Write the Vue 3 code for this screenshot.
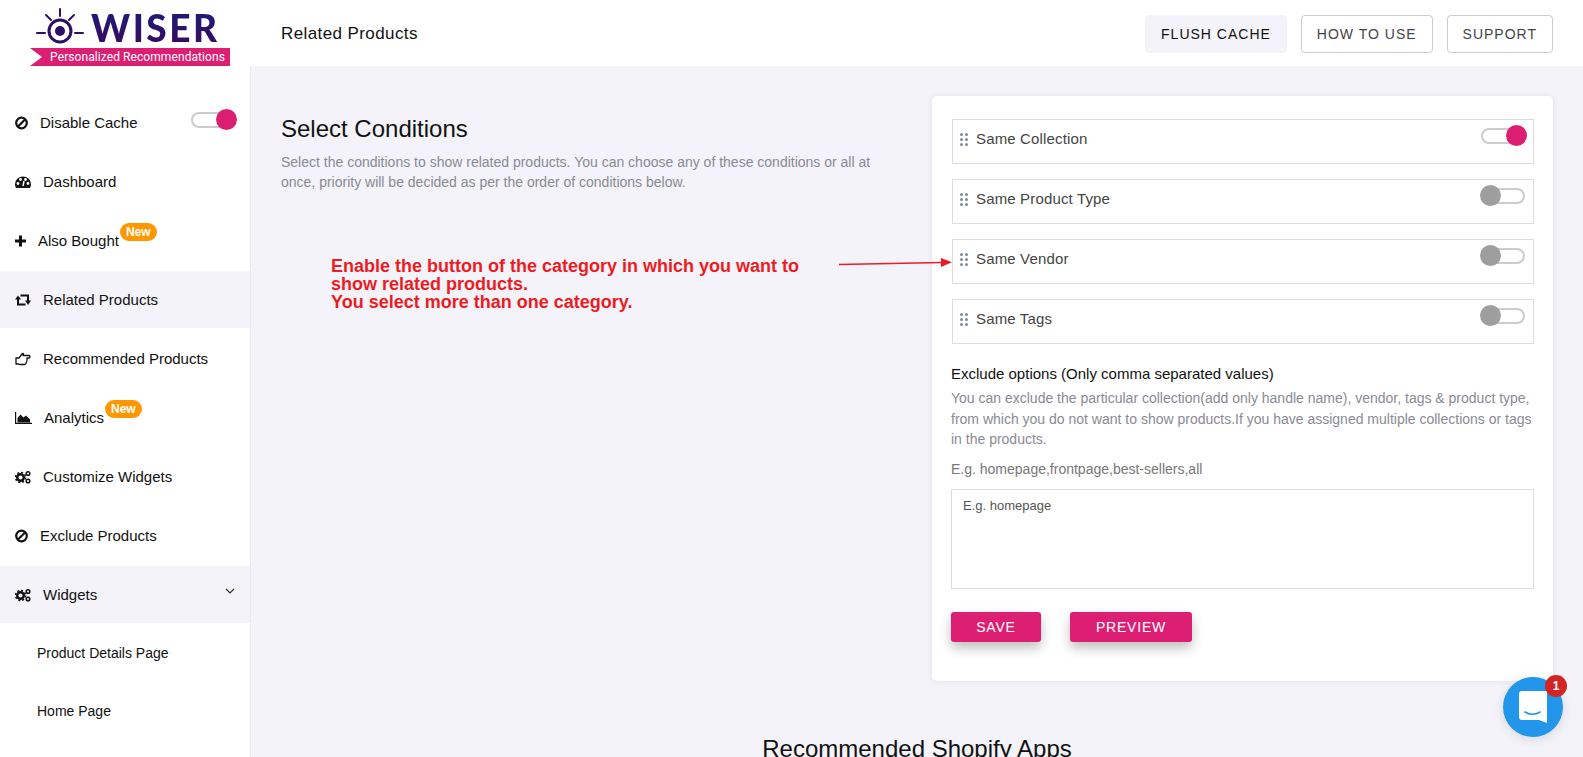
<script setup>
const navItems = [
  { label: "Dashboard", icon: "gauge", w: 16 },
  { label: "Also Bought", icon: "plus", w: 11, badge: true },
  { label: "Related Products", icon: "retweet", w: 16, active: true },
  { label: "Recommended Products", icon: "hand", w: 16 },
  { label: "Analytics", icon: "chart", w: 17, badge: true },
  { label: "Customize Widgets", icon: "cogs", w: 16 },
  { label: "Exclude Products", icon: "ban", w: 13 },
];

const conditions = [
  { label: "Same Collection", on: true },
  { label: "Same Product Type", on: false },
  { label: "Same Vendor", on: false },
  { label: "Same Tags", on: false },
];
</script>

<template>
  <div class="page">
    <header class="topbar">
      <div class="logo">
        <div class="logo-top">
          <svg class="eye" width="50" height="36" viewBox="0 0 50 36">
            <g fill="none" stroke="#2f0f63" stroke-width="2" stroke-linecap="round">
              <circle cx="25" cy="23" r="11" stroke-width="3" />
              <path d="M25 1v7M11 7l5 5M39 7l-5 5M2 25h8M40 25h8" />
            </g>
            <circle cx="25" cy="23" r="5" fill="#2f0f63" />
          </svg>
          <span class="wordmark">WISER</span>
        </div>
        <div class="logo-band">Personalized Recommendations</div>
      </div>
      <div class="page-title">Related Products</div>
      <div class="top-actions">
        <button class="btn-top flush">FLUSH CACHE</button>
        <button class="btn-top">HOW TO USE</button>
        <button class="btn-top">SUPPORT</button>
      </div>
    </header>

    <div class="layout">
      <aside class="sidebar">
        <div class="nav-item">
          <svg class="nav-icon" width="13" height="14" viewBox="0 0 13 14">
            <circle cx="6.5" cy="7" r="5.3" fill="none" stroke="#111" stroke-width="2.2" />
            <path d="M3 10.5l7-7" stroke="#111" stroke-width="2.2" />
          </svg>
          <span>Disable Cache</span>
          <span class="toggle side-toggle on"><i class="track"></i><i class="knob"></i></span>
        </div>

        <div v-for="item in navItems" :key="item.label" class="nav-item" :class="{ active: item.active }">
          <svg class="nav-icon" :width="item.w" height="14" :viewBox="`0 0 ${item.w} 14`">
            <template v-if="item.icon === 'gauge'">
              <path d="M0 9a8 7.500 0 0 1 16 0c0 1.600-.5 3-1.200 4H1.200C.5 12 0 10.600 0 9z" fill="#111" />
              <circle cx="3" cy="8.500" r="1.400" fill="#fff" />
              <circle cx="5.500" cy="4.500" r="1.400" fill="#fff" />
              <circle cx="13" cy="8.500" r="1.400" fill="#fff" />
              <circle cx="10.500" cy="4.500" r="1.400" fill="#fff" />
              <path d="M8 11l1-5" stroke="#fff" stroke-width="1.500" />
            </template>
            <path v-else-if="item.icon === 'plus'" d="M5.500 1.500v11M0 7h11" stroke="#111" stroke-width="3" />
            <template v-else-if="item.icon === 'retweet'">
              <path d="M3 5v6.500h7.500M13 9V2.500H5.500" fill="none" stroke="#111" stroke-width="2" />
              <path d="M0 6.500l3-4 3 4zM10 7.500l3 4.500 3-4.500z" fill="#111" />
            </template>
            <path v-else-if="item.icon === 'hand'" d="M1 6h3l3-4c.3-.6 1-.7 1.500-.5L8 3.500h6c1.300 0 1.300 2.500 0 2.500h-2c.3 1.500.1 3-.6 4-.2 1.500-.8 2.500-2 2.500H4.500L3.500 12H1z" fill="none" stroke="#111" stroke-width="1.300" stroke-linejoin="round" />
            <template v-else-if="item.icon === 'chart'">
              <path d="M.6 1v11.400H17" fill="none" stroke="#111" stroke-width="1.200" />
              <path d="M2.500 11.500V7l3-3.500 3 3 2.500-2 4 4v3z" fill="#111" />
            </template>
            <template v-else-if="item.icon === 'cogs'">
              <circle cx="5.500" cy="7.500" r="3.300" fill="none" stroke="#111" stroke-width="2.400" />
              <circle cx="5.500" cy="7.500" r="5" fill="none" stroke="#111" stroke-width="1.600" stroke-dasharray="2 1.930" />
              <circle cx="13" cy="3.500" r="1.800" fill="none" stroke="#111" stroke-width="1.500" />
              <circle cx="13" cy="11" r="1.800" fill="none" stroke="#111" stroke-width="1.500" />
            </template>
            <template v-else>
              <circle cx="6.500" cy="7" r="5.300" fill="none" stroke="#111" stroke-width="2.200" />
              <path d="M3 10.500l7-7" stroke="#111" stroke-width="2.200" />
            </template>
          </svg>
          <span>{{ item.label }}</span>
          <span v-if="item.badge" class="badge-new">New</span>
        </div>

        <div class="nav-item active">
          <svg class="nav-icon" width="16" height="14" viewBox="0 0 16 14">
            <circle cx="5.500" cy="7.500" r="3.300" fill="none" stroke="#111" stroke-width="2.400" />
            <circle cx="5.500" cy="7.500" r="5" fill="none" stroke="#111" stroke-width="1.600" stroke-dasharray="2 1.930" />
            <circle cx="13" cy="3.500" r="1.800" fill="none" stroke="#111" stroke-width="1.500" />
            <circle cx="13" cy="11" r="1.800" fill="none" stroke="#111" stroke-width="1.500" />
          </svg>
          <span>Widgets</span>
          <svg class="chevron" width="10" height="6" viewBox="0 0 10 6">
            <path d="M1 1l4 4 4-4" fill="none" stroke="#333" stroke-width="1.200" />
          </svg>
        </div>

        <div class="sub-item">Product Details Page</div>
        <div class="sub-item">Home Page</div>
      </aside>

      <main class="content">
        <div class="columns">
          <section class="intro">
            <h2 class="intro-title">Select Conditions</h2>
            <p class="intro-text">
              Select the conditions to show related products. You can choose any of these conditions or all at once, priority will be decided as per the order of conditions below.
            </p>
            <p class="note">
              Enable the button of the category in which you want to show related products.<br />
              You select more than one category.
            </p>
          </section>

          <section class="card">
            <div v-for="c in conditions" :key="c.label" class="cond-row">
              <span class="grip"><i v-for="n in 6" :key="n"></i></span>
              <span class="cond-label">{{ c.label }}</span>
              <span class="toggle" :class="{ on: c.on }"><i class="track"></i><i class="knob"></i></span>
            </div>

            <div class="exclude">
              <h4 class="exclude-title">Exclude options (Only comma separated values)</h4>
              <p class="exclude-text">
                You can exclude the particular collection(add only handle name), vendor, tags &amp; product type, from which you do not want to show products.If you have assigned multiple collections or tags in the products.
              </p>
              <p class="example">E.g. homepage,frontpage,best-sellers,all</p>
              <textarea class="exclude-input" placeholder="E.g. homepage"></textarea>

              <div class="card-actions">
                <button class="btn-pink save">SAVE</button>
                <button class="btn-pink preview">PREVIEW</button>
              </div>
            </div>
          </section>
        </div>

        <h2 class="apps-title">Recommended Shopify Apps</h2>

        <svg class="note-arrow" width="114" height="12" viewBox="0 0 114 12">
          <path d="M0 7.500L103 5.500" stroke="#ed1c24" stroke-width="1.500" />
          <path d="M102 1l11 4.300-11 4.700z" fill="#ed1c24" />
        </svg>
      </main>
    </div>

    <div class="chat">
      <svg width="30" height="34" viewBox="0 0 30 34">
        <path d="M4 1h25v32l-8-3H4a3 3 0 0 1-3-3V4a3 3 0 0 1 3-3z" fill="#fff" />
        <path d="M7 22c4 3 11 3 15 0" fill="none" stroke="#2196ea" stroke-width="1.600" stroke-linecap="round" />
      </svg>
      <span class="chat-badge">1</span>
    </div>
  </div>
</template>

<style scoped>
.page {
  height: 757px;
  overflow: hidden;
  position: relative;
  background: #f3f3f9;
  font-family: "Liberation Sans", Arial, sans-serif;
  color: #111;
}

/* Top bar */
.topbar {
  height: 66px;
  background: #fff;
  display: flex;
  align-items: center;
  padding: 0 30px;
}

.logo {
  width: 200px;
  height: 66px;
  flex-shrink: 0;
  display: flex;
  flex-direction: column;
  justify-content: flex-end;
}

.logo-top {
  display: flex;
  align-items: flex-start;
  height: 48px;
}

.eye {
  margin-left: 5px;
  margin-top: 8px;
}

.wordmark {
  font-family: Lato, "Liberation Sans", sans-serif;
  font-weight: 900;
  font-size: 37px;
  letter-spacing: 2.5px;
  line-height: 40px;
  margin-left: 6px;
  margin-top: 8px;
  background: linear-gradient(#1c1c7c, #3b0a5c);
  -webkit-background-clip: text;
  background-clip: text;
  color: transparent;
}

.logo-band {
  height: 18px;
  background: #dd1f74;
  color: #fff;
  font-family: Roboto, sans-serif;
  font-size: 12px;
  line-height: 18px;
  text-align: right;
  padding-right: 5px;
  letter-spacing: 0.08px;
  clip-path: polygon(0 0, 100% 0, 100% 100%, 0 100%, 12px 50%);
}

.page-title {
  margin-left: 51px;
  margin-top: 2px;
  font-size: 17px;
  letter-spacing: 0.4px;
  flex: 1;
}

.top-actions {
  display: flex;
  gap: 14px;
  margin-top: 2px;
}

.btn-top {
  height: 38px;
  padding: 0 15px;
  border: 1px solid #ccc;
  border-radius: 4px;
  background: #fff;
  font: 14px "Liberation Sans", Arial, sans-serif;
  letter-spacing: 1px;
  color: #444;
}

.flush {
  background: #f3f3f9;
  border-color: #f3f3f9;
  color: #111;
}

/* Sidebar */
.layout {
  display: flex;
  height: 691px;
}

.sidebar {
  width: 251px;
  flex-shrink: 0;
  box-sizing: border-box;
  background: #fff;
  border-right: 1px solid #e9e9f0;
  padding-top: 28px;
}

.nav-item {
  height: 57px;
  margin-bottom: 2px;
  display: flex;
  align-items: center;
  padding-left: 15px;
  font-size: 15px;
  position: relative;
}

.nav-item.active {
  background: #f3f3f9;
}

.nav-icon {
  margin-right: 12px;
  flex-shrink: 0;
}

.badge-new {
  align-self: center;
  background: #ff9800;
  color: #fff;
  font-size: 12px;
  font-weight: 700;
  line-height: 18px;
  height: 18px;
  padding: 0 6px;
  border-radius: 10px;
  margin-left: 1px;
  margin-top: -18px;
}

.chevron {
  position: absolute;
  right: 15px;
  top: 22px;
}

.sub-item {
  height: 58px;
  line-height: 56px;
  padding-left: 37px;
  font-size: 14px;
}

/* Toggles */
.toggle {
  position: relative;
  display: block;
  width: 47px;
  height: 21px;
  flex-shrink: 0;
}

.track {
  position: absolute;
  left: 1px;
  right: 2px;
  top: 3px;
  height: 16px;
  box-sizing: border-box;
  border: 2px solid #ccc;
  border-radius: 8px;
  background: #fff;
}

.knob {
  position: absolute;
  left: 0;
  top: 0;
  width: 21px;
  height: 21px;
  border-radius: 50%;
  background: #9e9e9e;
}

.toggle.on .knob {
  left: 26px;
  background: #dd1f74;
}

.side-toggle {
  position: absolute;
  left: 190px;
  top: 15px;
}

/* Main area */
.content {
  flex: 1;
  min-width: 0;
  position: relative;
  padding: 30px 30px 0 30px;
}

.columns {
  display: flex;
  justify-content: space-between;
}

.intro {
  width: 600px;
}

.intro-title {
  margin: 19px 0 0;
  font-size: 24px;
  font-weight: 400;
  line-height: 28px;
  color: #111;
}

.intro-text {
  margin: 9px 0 0;
  font-size: 14px;
  line-height: 20px;
  color: #8a8a94;
}

.note {
  margin: 65px 0 0 50px;
  width: 480px;
  font-size: 18px;
  font-weight: 700;
  line-height: 18px;
  color: #ed1c24;
}

.card {
  width: 621px;
  height: 585px;
  flex-shrink: 0;
  box-sizing: border-box;
  background: #fff;
  border-radius: 5px;
  box-shadow: 0 0 6px rgba(0, 0, 0, 0.08);
  padding: 23px 19px 0 20px;
}

.cond-row {
  height: 45px;
  box-sizing: border-box;
  border: 1px solid #ddd;
  margin-bottom: 15px;
  display: flex;
  align-items: flex-start;
  padding: 5px 6px 0 7px;
}

.grip {
  display: grid;
  grid-template-columns: 3px 3px;
  gap: 2px;
  margin-top: 8px;
  margin-right: 8px;
}

.grip i {
  width: 3px;
  height: 3px;
  border-radius: 50%;
  background: #7c8a99;
}

.cond-label {
  flex: 1;
  font-size: 15px;
  letter-spacing: 0.15px;
  line-height: 27px;
  color: #444;
}

.exclude {
  margin-left: -1px;
}

.exclude-title {
  margin: 20px 0 0;
  font-size: 15px;
  font-weight: 400;
  line-height: 20px;
  color: #111;
}

.exclude-text {
  margin: 4px 0 0;
  font-size: 14px;
  line-height: 20.5px;
  color: #8a8a94;
}

.example {
  margin: 9px 0 0;
  font-size: 14px;
  line-height: 20px;
  color: #777;
}

.exclude-input {
  display: block;
  width: 100%;
  height: 100px;
  margin-top: 10px;
  box-sizing: border-box;
  border: 1px solid #ddd;
  padding: 8px 11px;
  font: 13px "Liberation Sans", Arial, sans-serif;
  resize: none;
  outline: none;
}

.exclude-input::placeholder {
  color: #555;
}

.card-actions {
  display: flex;
  gap: 29px;
  margin-top: 23px;
}

.btn-pink {
  height: 30px;
  border: none;
  border-radius: 3px;
  background: #dd1f74;
  color: #fff;
  font: 14px "Liberation Sans", Arial, sans-serif;
  letter-spacing: 0.8px;
  box-shadow: 0 6px 12px rgba(0, 0, 0, 0.25);
}

.save {
  width: 90px;
}

.preview {
  width: 122px;
}

.apps-title {
  margin: 54px 0 0;
  text-align: center;
  font-size: 24px;
  font-weight: 400;
  line-height: 28px;
  color: #111;
}

.note-arrow {
  position: absolute;
  left: 588px;
  top: 191px;
}

/* Chat launcher */
.chat {
  position: absolute;
  left: 1503px;
  top: 677px;
  width: 60px;
  height: 60px;
  border-radius: 50%;
  background: #2196ea;
  box-shadow: 0 2px 12px rgba(0, 0, 0, 0.12);
  display: flex;
  align-items: center;
  justify-content: center;
}

.chat-badge {
  position: absolute;
  left: 42px;
  top: -2px;
  width: 22px;
  height: 22px;
  border-radius: 50%;
  background: #d32323;
  color: #fff;
  font-size: 12px;
  font-weight: 700;
  line-height: 22px;
  text-align: center;
}
</style>

<style>
html,
body {
  margin: 0;
  overflow: hidden;
}
</style>
